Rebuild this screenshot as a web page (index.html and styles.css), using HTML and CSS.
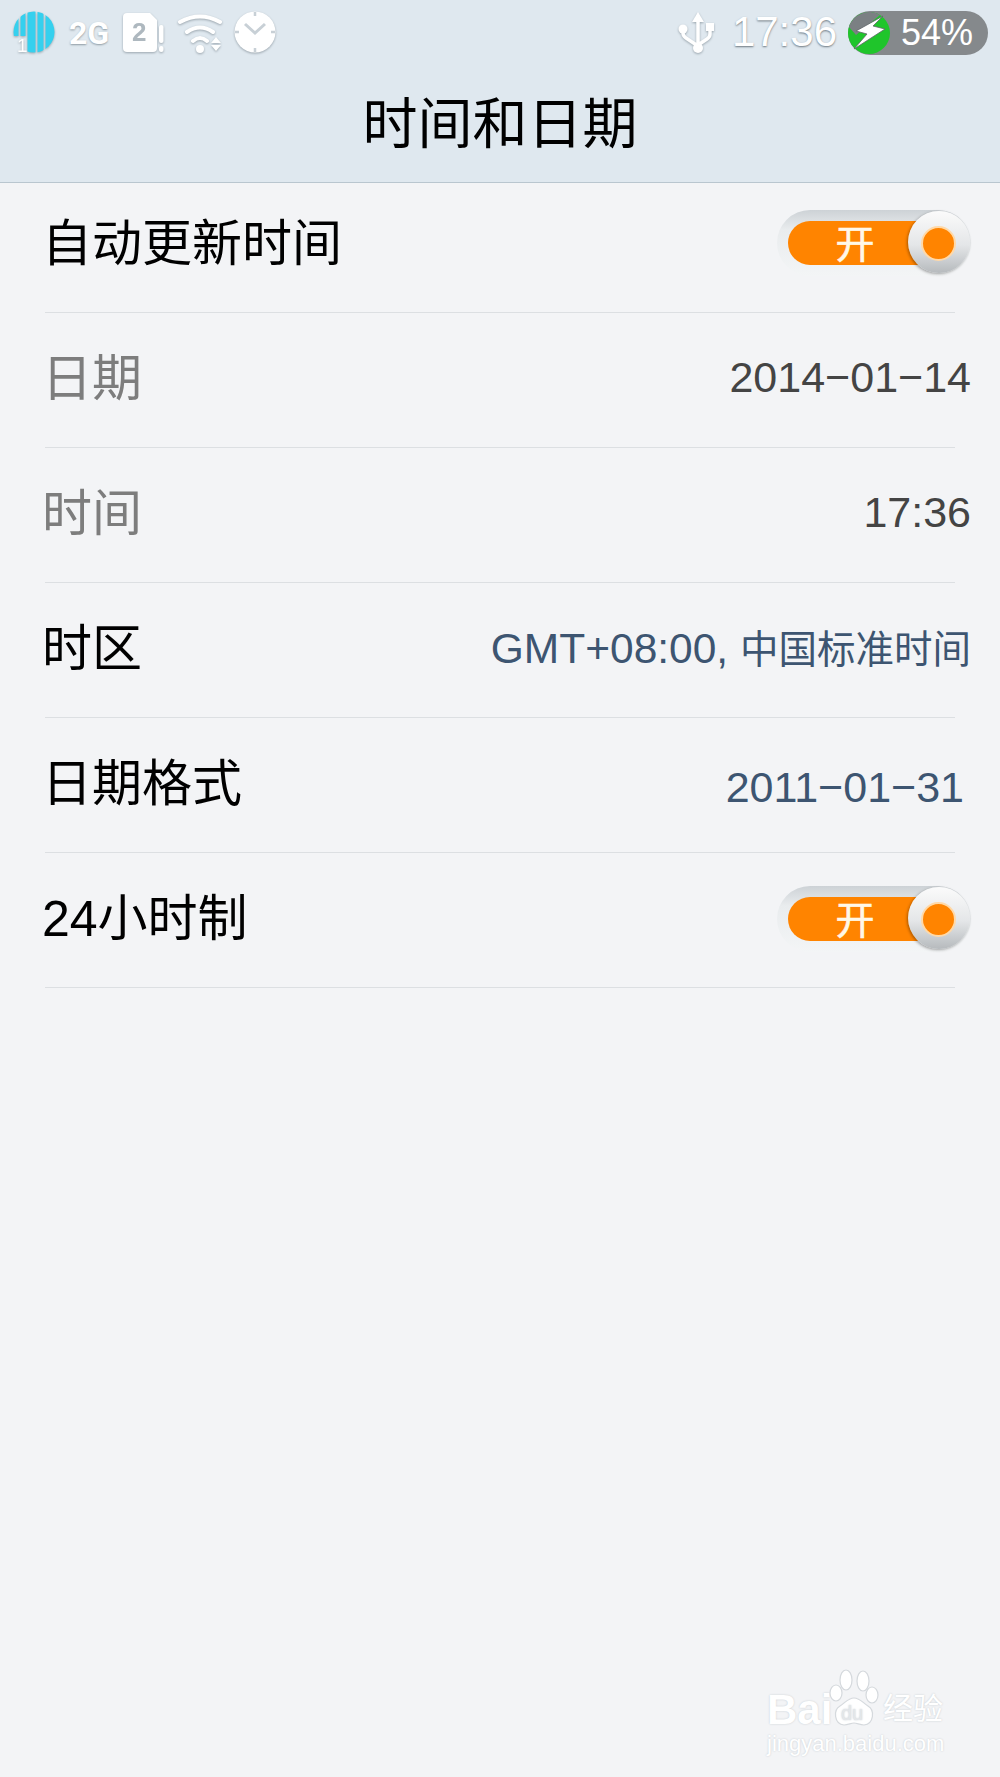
FILE: index.html
```html
<!DOCTYPE html>
<html lang="zh-CN">
<head>
    <meta charset="UTF-8">
    <meta name="viewport" content="width=device-width, initial-scale=1.0">
    <title>时间和日期</title>
    <link rel="stylesheet" href="styles.css">
</head>
<body>
<div class="header">
    <div class="status-bar">
        <div class="status-left">
            <svg class="status-icon" width="44" height="44" viewBox="0 0 44 44">
                <clipPath id="signalClip"><circle cx="22" cy="21" r="20.500"/></clipPath>
                <g clip-path="url(#signalClip)" fill="#35d0ee">
                    <rect x="1" y="0" width="5.500" height="25"/>
                    <rect x="8.500" y="0" width="5" height="25"/>
                    <rect x="15.500" y="0" width="8" height="44"/>
                    <rect x="25.500" y="0" width="6" height="44"/>
                    <rect x="33.500" y="0" width="10" height="44"/>
                </g>
                <text class="signal-num" x="5" y="41">1</text>
            </svg>
            <span class="net-label">2G</span>
            <svg class="status-icon icon-sim" width="44" height="44" viewBox="0 0 44 44">
                <path d="M0 6a4 4 0 0 1 4-4h23l7 7v28a4 4 0 0 1-4 4H4a4 4 0 0 1-4-4z" fill="#fff"/>
                <rect x="36" y="14" width="4.500" height="18" rx="2" fill="#fff"/>
                <rect x="36" y="35" width="4.500" height="6" rx="2" fill="#fff"/>
                <text class="sim-num" x="9" y="30">2</text>
            </svg>
            <svg class="status-icon icon-wifi" width="46" height="44" viewBox="0 0 46 44">
                <path d="M4 11Q24 0 44 11M11 21Q24 12 37 21M17 30Q24 24 31 30" fill="none" stroke="#fff" stroke-width="4" stroke-linecap="round"/>
                <circle cx="24" cy="38" r="4" fill="#fff"/>
                <path d="M35 32l5-6 5 6zM35 34h10l-5 6z" fill="#fff"/>
            </svg>
            <svg class="status-icon icon-clock" width="44" height="44" viewBox="0 0 44 44">
                <circle cx="22" cy="21" r="20.500" fill="#fff"/>
                <path d="M22 1v4M22 37v4M2 21h4M38 21h4" stroke="#c8d0d6" stroke-width="2.500"/>
                <path d="M12 13l10 9 10-9" fill="none" stroke="#c8d0d6" stroke-width="3"/>
            </svg>
        </div>
        <div class="status-right">
            <svg class="status-icon" width="38" height="44" viewBox="0 0 38 44">
                <path d="M20 1l6 10h-12z" fill="#fff"/>
                <path d="M20 9v28M5 18v4q0 3 3 5l12 8M32 19v4q0 3-3 5l-9 6" fill="none" stroke="#fff" stroke-width="3.500"/>
                <circle cx="20" cy="37" r="5" fill="#fff"/>
                <circle cx="5" cy="18" r="4.500" fill="#fff"/>
                <rect x="28" y="12" width="8" height="8" fill="#fff"/>
            </svg>
            <span class="clock">17:36</span>
            <div class="battery">
                <svg class="battery-bolt" width="44" height="44" viewBox="0 0 44 44">
                    <circle cx="21" cy="22" r="21" fill="#1fc52b"/>
                    <path d="M1 16a21 21 0 0 1 31-12L8 24z" fill="#7b8083"/>
                    <path d="M35 5L8 20l11 3L6 38l31-20-12-3z" fill="#fff" stroke="#5f6568" stroke-width="0.800"/>
                </svg>
                <span class="battery-text">54%</span>
            </div>
        </div>
    </div>
    <h1 class="page-title">时间和日期</h1>
</div>
<div class="settings-list">
    <div class="row row-first">
        <span class="row-label">自动更新时间</span>
        <div class="switch">
            <div class="switch-track"><span class="switch-text">开</span></div>
            <div class="switch-knob"></div>
        </div>
    </div>
    <div class="row">
        <span class="row-label disabled">日期</span>
        <span class="row-value">2014−01−14</span>
    </div>
    <div class="row">
        <span class="row-label disabled">时间</span>
        <span class="row-value">17:36</span>
    </div>
    <div class="row">
        <span class="row-label">时区</span>
        <span class="row-value link zone">GMT+08:00, <span class="zone-name">中国标准时间</span></span>
    </div>
    <div class="row">
        <span class="row-label">日期格式</span>
        <span class="row-value link inset">2011−01−31</span>
    </div>
    <div class="row">
        <span class="row-label">24小时制</span>
        <div class="switch">
            <div class="switch-track"><span class="switch-text">开</span></div>
            <div class="switch-knob"></div>
        </div>
    </div>
</div>
<div class="watermark">
    <div class="wm-top">
        <span class="wm-bai">Bai</span>
        <svg class="wm-paw" width="52" height="60" viewBox="0 0 52 60">
            <g fill="#fff" stroke="#d5d9dd" stroke-width="1.200">
                <ellipse cx="8" cy="24" rx="6" ry="8"/>
                <ellipse cx="18" cy="11" rx="6" ry="10"/>
                <ellipse cx="35" cy="12" rx="6" ry="10"/>
                <ellipse cx="44" cy="26" rx="6" ry="8"/>
                <path d="M26 29c6 0 9 5 14 8 7 4 6 18-4 19-4 0-7-2-10-2s-6 2-10 2c-10-1-11-15-4-19 5-3 8-8 14-8z"/>
            </g>
            <text class="wm-du" x="13" y="51">du</text>
        </svg>
        <span class="wm-jy">经验</span>
    </div>
    <div class="wm-url">jingyan.baidu.com</div>
</div>
</body>
</html>
```

FILE: styles.css
```css
* {
    box-sizing: border-box;
}

body {
    margin: 0;
    height: 1777px;
    overflow: hidden;
    position: relative;
    background-color: #f3f4f6;
    font-family: "Noto Sans CJK SC", sans-serif;
}

.header {
    height: 183px;
    background-color: #dfe8ef;
    border-bottom: 1px solid #b9c6cf;
}

.status-bar {
    height: 66px;
    padding: 11px 12px 0 12px;
    display: flex;
    justify-content: space-between;
    align-items: flex-start;
}

.status-left,
.status-right {
    display: flex;
    align-items: center;
    height: 44px;
}

.status-icon {
    filter: drop-shadow(0 1px 1px #9aa5ad);
}

.icon-sim {
    margin-left: 10px;
}

.icon-wifi {
    margin-left: 9px;
}

.icon-clock {
    margin-left: 11px;
}

.signal-num {
    font-family: "Liberation Sans", sans-serif;
    font-size: 19px;
    fill: #fff;
}

.sim-num {
    font-family: "Liberation Sans", sans-serif;
    font-size: 26px;
    font-weight: bold;
    fill: #aeb8bf;
}

.net-label {
    margin-left: 13px;
    width: 44px;
    font-family: "Roboto", sans-serif;
    font-size: 32px;
    line-height: 44px;
    font-weight: bold;
    color: #fff;
    text-shadow: 0 1px 2px #8f9ba3;
}

.clock {
    margin-left: 16px;
    margin-bottom: 3px;
    font-family: "Liberation Sans", sans-serif;
    font-size: 42px;
    line-height: 42px;
    color: #fff;
    text-shadow: 0 1px 2px #6d7880;
}

.battery {
    margin-left: 11px;
    width: 140px;
    height: 44px;
    border-radius: 22px;
    background-color: #85898c;
    display: flex;
    align-items: center;
}

.battery-text {
    margin-left: 9px;
    font-family: "Liberation Sans", sans-serif;
    font-size: 36px;
    line-height: 44px;
    color: #fff;
}

.page-title {
    margin: -3px 0 0;
    text-align: center;
    font-size: 55px;
    line-height: 112px;
    font-weight: normal;
    color: #000;
}

.row {
    height: 135px;
    padding: 0 29px 0 42px;
    display: flex;
    justify-content: space-between;
    align-items: center;
    position: relative;
}

.row-first {
    height: 130px;
}

.row::after {
    content: "";
    position: absolute;
    left: 45px;
    right: 45px;
    bottom: 0;
    height: 1px;
    background-color: #dcdfe2;
}

.row-label {
    font-family: "Liberation Sans", "Noto Sans CJK SC", sans-serif;
    font-size: 50px;
    line-height: 60px;
    color: #000;
    margin-bottom: 4px;
}

.row-first .row-label {
    margin-bottom: 9px;
}

.row-label.disabled {
    color: #7d7d7d;
}

.row-value {
    font-family: "Liberation Sans", sans-serif;
    font-size: 43px;
    line-height: 50px;
    color: #444;
    margin-bottom: 7px;
}

.row-value.link {
    color: #3d5571;
}

.row-value.zone {
    font-size: 42.500px;
}

.zone-name {
    font-family: "Noto Sans CJK SC", sans-serif;
    font-size: 38.500px;
}

.row-value.inset {
    padding-right: 7px;
    margin-top: 6px;
    margin-bottom: 4px;
}

.switch {
    width: 194px;
    height: 66px;
    margin-bottom: 4px;
    border-radius: 33px;
    background: linear-gradient(#cdd2d6, #e9ecee 30%, #f3f5f6);
    position: relative;
    padding: 11px 0 0 11px;
}

.row-first .switch {
    margin-bottom: 11px;
}

.switch-track {
    width: 130px;
    height: 44px;
    border-radius: 22px 0 0 22px;
    background-color: #ff8400;
    text-align: center;
}

.switch-text {
    font-size: 39px;
    line-height: 40px;
    padding-left: 4px;
    color: #fff8e8;
    -webkit-text-stroke: 0.6px #fff8e8;
    display: block;
}

.switch-knob {
    position: absolute;
    right: 1px;
    top: 1px;
    width: 62px;
    height: 62px;
    border-radius: 50%;
    background: linear-gradient(#fbfbfb, #e4e6e8 55%, #b6babd);
    box-shadow: -1px 1px 3px rgba(0, 0, 0, 0.35);
}

.switch-knob::after {
    content: "";
    position: absolute;
    left: 13px;
    top: 15px;
    width: 31px;
    height: 31px;
    border-radius: 50%;
    background-color: #ff8400;
    border: 2px solid #ffd9a8;
}

.watermark {
    position: absolute;
    left: 767px;
    top: 1669px;
    width: 190px;
    color: #fff;
    text-shadow: 0 0 2px #c3c9ce;
}

.wm-top {
    display: flex;
    align-items: flex-end;
}

.wm-bai {
    font-family: "Liberation Sans", sans-serif;
    font-size: 42px;
    line-height: 38px;
    font-weight: bold;
    width: 61px;
}

.wm-du {
    font-family: "Liberation Sans", sans-serif;
    font-size: 20px;
    fill: #e4e7ea;
}

.wm-jy {
    margin-left: 3px;
    font-size: 30px;
    line-height: 46px;
}

.wm-url {
    font-family: "Liberation Sans", sans-serif;
    font-size: 22px;
    line-height: 26px;
    margin-top: 2px;
    white-space: nowrap;
}
```
